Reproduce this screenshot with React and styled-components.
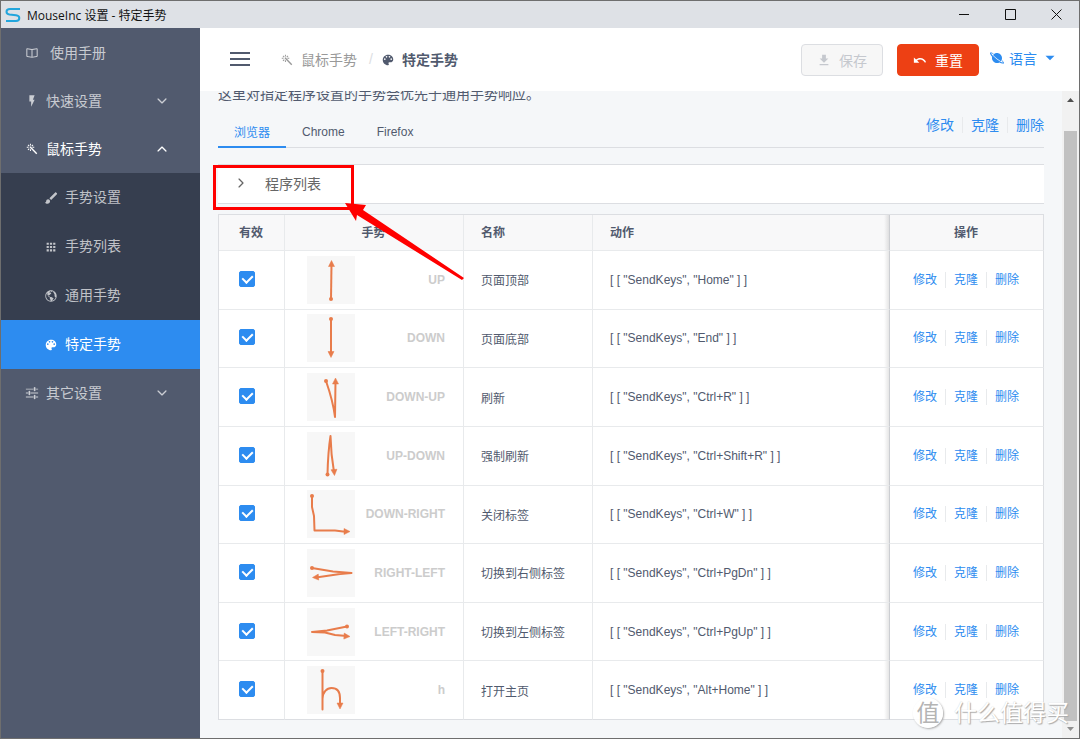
import React, { useState } from 'react';
import styled, { createGlobalStyle } from 'styled-components'
import { IoIosArrowDown, IoIosArrowForward, IoIosArrowUp, IoMdApps, IoMdArrowDropdown, IoMdBook, IoMdBrush, IoMdColorPalette, IoMdColorWand, IoMdDownload, IoMdFlash, IoMdGlobe, IoMdOptions, IoMdPlanet, IoMdUndo } from 'react-icons/io'

const GlobalStyle = createGlobalStyle`
* {
    box-sizing: border-box;
}
body {
    margin: 0;
    font-family: "Liberation Sans", "Noto Sans CJK SC", sans-serif;
    font-size: 12px;
    color: #515a6e;
}
button, input {
    font-family: inherit;
}
a {
    color: #2d8cf0;
    text-decoration: none;
}
`
const Window = styled.div`
display: flex;
flex-direction: column;
height: 100vh;
border: 1px solid #6e6e6e;
position: relative;
overflow: hidden;
`
const TitleBar = styled.div`
display: flex;
align-items: center;
flex: none;
height: 27px;
padding-left: 4px;
background-color: #dee1e6;
color: #111;
font-family: "Open Sans", "Noto Sans CJK SC", sans-serif;
`
const Title = styled.span`
flex: 1;
margin-left: 6px;
`
const WindowButton = styled.button`
display: flex;
align-items: center;
justify-content: center;
width: 46px;
height: 27px;
padding: 0;
border: none;
background: none;
`
const Body = styled.div`
display: flex;
flex: 1;
min-height: 0;
`
const Sidebar = styled.nav`
flex: none;
width: 199px;
padding-top: 1px;
background-color: #515a6e;
`
const MenuItem = styled.a`
display: flex;
align-items: center;
gap: ${props => props.$wide ? 11 : 7}px;
height: 48px;
padding: 0 31px 0 24px;
font-size: 14px;
color: ${props => props.$open ? '#fff' : 'rgba(255, 255, 255, 0.7)'};
svg {
    flex: none;
}
span {
    flex: 1;
    padding-bottom: 3px;
}
`
const SubMenu = styled.div`
background-color: #363e4f;
`
const SubItem = styled(MenuItem)`
height: 49px;
padding-left: 43px;
background-color: ${props => props.$active ? '#2d8cf0' : 'transparent'};
color: ${props => props.$active ? '#fff' : 'rgba(255, 255, 255, 0.7)'};
`
const Main = styled.div`
display: flex;
flex-direction: column;
flex: 1;
min-width: 0;
background-color: #f5f7f9;
`
const Header = styled.header`
display: flex;
align-items: center;
flex: none;
height: 63px;
padding: 0 20px 0 30px;
background-color: #fff;
`
const MenuButton = styled.button`
display: flex;
padding: 0 0 2px;
border: none;
background: none;
color: #515a6e;
`
const Breadcrumb = styled.div`
display: flex;
align-items: center;
flex: 1;
gap: 7px;
margin-left: 30px;
font-size: 14px;
color: #999;
span, b {
    padding-bottom: 2px;
}
`
const Separator = styled.span`
margin: 0 1px 0 5px;
color: #dcdee2;
`
const Current = styled.b`
color: #515a6e;
`
const HeaderButton = styled.button`
display: flex;
align-items: center;
justify-content: center;
gap: 8px;
width: 82px;
height: 32px;
padding: 0;
margin-right: 14px;
border: 1px solid ${props => props.$danger ? '#ed4014' : '#dcdee2'};
border-radius: 4px;
background-color: ${props => props.$danger ? '#ed4014' : '#f7f7f7'};
color: ${props => props.$danger ? '#fff' : '#c5c8ce'};
font-size: 14px;
`
const Language = styled.a`
display: flex;
align-items: center;
gap: 4px;
margin-left: -4px;
padding-bottom: 3px;
font-size: 14px;
`
const ScrollArea = styled.div`
display: flex;
flex: 1;
min-height: 0;
`
const Content = styled.main`
display: flex;
flex-direction: column;
flex: 1;
min-width: 0;
padding: 0 18px;
overflow: hidden;
`
const Intro = styled.p`
flex: none;
margin: -7px 0 13px;
font-size: 14px;
line-height: 20px;
`
const Tabs = styled.div`
display: flex;
flex: none;
height: 31px;
border-bottom: 1px solid #dcdee2;
`
const Tab = styled.button`
height: 31px;
padding: 0 16px;
border: none;
border-bottom: 2px solid ${props => props.$active ? '#2d8cf0' : 'transparent'};
background: none;
color: ${props => props.$active ? '#2d8cf0' : '#515a6e'};
font-size: 12px;
`
const Actions = styled.div`
display: flex;
justify-content: center;
font-size: ${props => props.$size || 12}px;
line-height: 16px;
a + a {
    margin-left: 8px;
    padding-left: 8px;
    border-left: 1px solid #e8eaec;
}
`
const TabExtra = styled.div`
margin-left: auto;
`
const Collapse = styled.div`
position: relative;
flex: none;
margin: 16px 0 10px;
border-top: 1px solid #dcdee2;
border-bottom: 1px solid #dcdee2;
background-color: #fff;
`
const CollapseHeader = styled.button`
display: flex;
align-items: center;
gap: 17px;
width: 100%;
height: 38px;
padding: 0 16px 2px;
border: none;
background: none;
color: #666;
font-size: 14px;
`
const Marker = styled.div`
position: absolute;
top: 0;
left: -5px;
width: 141px;
height: 45px;
border: 3px solid #f00;
`
const Pointer = styled.svg`
position: absolute;
top: 36px;
left: 126px;
z-index: 2;
pointer-events: none;
`
const TableWrap = styled.div`
flex: 1;
min-height: 0;
margin-bottom: 18px;
`
const Table = styled.table`
width: 100%;
height: 100%;
table-layout: fixed;
border-collapse: separate;
border-spacing: 0;
border-top: 1px solid #dcdee2;
border-left: 1px solid #dcdee2;
background-color: #fff;
th, td {
    padding: 0 18px 0 17px;
    border-right: 1px solid #e8eaec;
    border-bottom: 1px solid #e8eaec;
    text-align: left;
}
th {
    height: 36px;
    padding-bottom: 2px;
    background-color: #f8f8f9;
}
th:nth-child(-n + 2), th:last-child, td:first-child {
    text-align: center;
}
th:last-child, td:last-child {
    border-left: 1px solid #ccced2;
    border-right-color: #dcdee2;
}
tr:last-child td {
    border-bottom-color: #dcdee2;
}
th:nth-child(4), td:nth-child(4) {
    border-right: none;
    background-image: linear-gradient(to left, rgba(0, 0, 0, 0.1), transparent 5px);
}
`
const Col = styled.col`
width: ${props => props.$width ? props.$width + 'px' : 'auto'};
`
const Checkbox = styled.input`
appearance: none;
display: inline-grid;
place-content: center;
width: 16px;
height: 16px;
margin: 0 8px 2px 0;
border: 1px solid #2d8cf0;
border-radius: 2px;
background-color: #fff;
vertical-align: middle;
&:checked {
    background-color: #2d8cf0;
}
&:checked::after {
    content: "";
    width: 5px;
    height: 8px;
    border: solid #fff;
    border-width: 0 2px 2px 0;
    transform: translateY(-1px) rotate(45deg);
}
`
const GestureCell = styled.div`
display: flex;
align-items: center;
justify-content: space-between;
padding-left: 5px;
color: #ccc;
font-weight: bold;
svg {
    background-color: #f7f7f7;
}
`
const Scrollbar = styled.div`
display: flex;
flex-direction: column;
align-items: center;
flex: none;
width: 17px;
padding: 7px 0;
background-color: #f1f1f1;
`
const Track = styled.div`
flex: 1;
width: 13px;
margin: 9px 0 6px;
padding-top: 20px;
`
const Thumb = styled.div`
height: 100%;
background-color: #c1c1c1;
`
const ArrowMark = styled.svg`
flex: none;
`
const Watermark = styled.div`
position: absolute;
right: 10px;
bottom: 9px;
z-index: 3;
display: flex;
align-items: center;
gap: 11px;
color: #fff;
font-size: 23px;
line-height: 32px;
text-shadow: 1px 1px 1px #aaa, 0 0 1px #ccc;
pointer-events: none;
`
const Badge = styled.span`
display: flex;
align-items: center;
justify-content: center;
width: 30px;
height: 30px;
border-radius: 50%;
background-color: rgba(255, 255, 255, 0.9);
box-shadow: 1px 1px 2px #aaa;
color: #b4b4b4;
text-shadow: none;
`

const gestures = [
    { code: 'UP', name: '页面顶部', key: 'Home', start: [24, 43], d: 'M24 43L24.5 8', tip: [24.5, 4.5, -90] },
    { code: 'DOWN', name: '页面底部', key: 'End', start: [24, 5], d: 'M24 5V41', tip: [24, 43.5, 90] },
    { code: 'DOWN-UP', name: '刷新', key: 'Ctrl+R', start: [19, 8], d: 'M19 8Q26 28 28 44L28.5 8', tip: [28.5, 5, -90] },
    { code: 'UP-DOWN', name: '强制刷新', key: 'Ctrl+Shift+R', start: [20.5, 42.5], d: 'M20.5 42.5Q21 20 23.5 4Q24 23 27 40', tip: [27.5, 43.5, 85] },
    { code: 'DOWN-RIGHT', name: '关闭标签', key: 'Ctrl+W', start: [5, 6], d: 'M5 6V17L7 26L7.5 40.5H28L36 41.5H40', tip: [43, 41.5, 0] },
    { code: 'RIGHT-LEFT', name: '切换到右侧标签', key: 'Ctrl+PgDn', start: [5, 19], d: 'M5 19L26 22.5L44.5 24L33 25L9 28.5', tip: [5.5, 28.5, 176] },
    { code: 'LEFT-RIGHT', name: '切换到左侧标签', key: 'Ctrl+PgUp', start: [40, 18.5], d: 'M40 18.5L20 22.5L5 24L18 24.5L28 27L40 28', tip: [43, 28.5, 4] },
    { code: 'h', name: '打开主页', key: 'Alt+Home', start: [15.5, 5], d: 'M15.5 5V43.5V33C15.5 26 20 22 24.5 22C30 22 33 25 33 32V40', tip: [33, 43, 90] },
]

const GestureIcon = ({ start, d, tip }) => (
    <svg width="48" height="48" viewBox="0 0 48 48">
        <path d={d} fill="none" stroke="#e87c4b" strokeWidth="2" strokeLinejoin="round" />
        <circle cx={start[0]} cy={start[1]} r="2" fill="#e87c4b" />
        <path d="M0 0L-6 -3V3Z" fill="#e87c4b" stroke="#e87c4b" strokeWidth=".5" transform={`translate(${tip[0]} ${tip[1]}) rotate(${tip[2]})`} />
    </svg>
)

const ActionLinks = ({ size }) => (
    <Actions $size={size}>
        <a href="#edit">修改</a>
        <a href="#clone">克隆</a>
        <a href="#delete">删除</a>
    </Actions>
)

const Row = ({ gesture }) => {
    const [checked, setChecked] = useState(true)
    return (
        <tr>
            <td><Checkbox type="checkbox" aria-label={gesture.name} checked={checked} onChange={() => setChecked(!checked)} /></td>
            <td>
                <GestureCell>
                    <GestureIcon {...gesture} />
                    <span>{gesture.code}</span>
                </GestureCell>
            </td>
            <td>{gesture.name}</td>
            <td>{`[ [ "SendKeys", "${gesture.key}" ] ]`}</td>
            <td><ActionLinks /></td>
        </tr>
    )
}

const App = () => {
    const [tab, setTab] = useState('浏览器')
    return (
        <Window>
            <GlobalStyle />
            <TitleBar>
                <svg width="16" height="16" viewBox="0 0 16 16" fill="none" stroke="#22a5dc" strokeWidth="2">
                    <path d="M15 2H5C2.5 2 1.5 3 1.5 4.7C1.5 6.5 2.8 7.2 4.5 7.5L11 8.3C13 8.6 14.3 9.3 14.3 11C14.3 13 13 14 11 14H1" />
                </svg>
                <Title>MouseInc 设置 - 特定手势</Title>
                <WindowButton aria-label="最小化">
                    <svg width="11" height="11" stroke="#111"><path d="M0 5.5H10" /></svg>
                </WindowButton>
                <WindowButton aria-label="最大化">
                    <svg width="11" height="11" stroke="#111" fill="none"><path d="M.5 .5H10.5V10.5H.5Z" /></svg>
                </WindowButton>
                <WindowButton aria-label="关闭">
                    <svg width="11" height="11" stroke="#111"><path d="M.5 .5L10.5 10.5M10.5 .5L.5 10.5" /></svg>
                </WindowButton>
            </TitleBar>
            <Body>
                <Sidebar>
                    <MenuItem href="#manual" $wide><IoMdBook size={14} /><span>使用手册</span></MenuItem>
                    <MenuItem href="#quick"><IoMdFlash size={14} /><span>快速设置</span><IoIosArrowDown size={14} /></MenuItem>
                    <MenuItem href="#gesture" $open><IoMdColorWand size={14} /><span>鼠标手势</span><IoIosArrowUp size={14} /></MenuItem>
                    <SubMenu>
                        <SubItem href="#gesture-settings"><IoMdBrush size={14} /><span>手势设置</span></SubItem>
                        <SubItem href="#gesture-list"><IoMdApps size={14} /><span>手势列表</span></SubItem>
                        <SubItem href="#gesture-common"><IoMdGlobe size={14} /><span>通用手势</span></SubItem>
                        <SubItem href="#gesture-specific" $active><IoMdColorPalette size={14} /><span>特定手势</span></SubItem>
                    </SubMenu>
                    <MenuItem href="#other"><IoMdOptions size={14} /><span>其它设置</span><IoIosArrowDown size={14} /></MenuItem>
                </Sidebar>
                <Main>
                    <Header>
                        <MenuButton aria-label="菜单">
                            <svg width="20" height="14" stroke="currentColor" strokeWidth="2"><path d="M0 1H20M0 7H20M0 13H20" /></svg>
                        </MenuButton>
                        <Breadcrumb>
                            <IoMdColorWand size={14} />
                            <span>鼠标手势</span>
                            <Separator>/</Separator>
                            <IoMdColorPalette size={14} color="#515a6e" />
                            <Current>特定手势</Current>
                        </Breadcrumb>
                        <HeaderButton disabled><IoMdDownload size={14} />保存</HeaderButton>
                        <HeaderButton $danger><IoMdUndo size={14} />重置</HeaderButton>
                        <Language href="#language">
                            <IoMdPlanet size={16} />
                            语言
                            <IoMdArrowDropdown size={18} />
                        </Language>
                    </Header>
                    <ScrollArea>
                        <Content>
                            <Intro>这里对指定程序设置的手势会优先于通用手势响应。</Intro>
                            <Tabs>
                                {['浏览器', 'Chrome', 'Firefox'].map(name => (
                                    <Tab key={name} $active={tab === name} onClick={() => setTab(name)}>{name}</Tab>
                                ))}
                                <TabExtra><ActionLinks size={14} /></TabExtra>
                            </Tabs>
                            <Collapse>
                                <CollapseHeader><IoIosArrowForward size={14} />程序列表</CollapseHeader>
                                <Marker />
                                <Pointer width="122" height="80" viewBox="0 0 122 80">
                                    <path d="M1 2L22 4L19 9L120 77L118 79L13 14L12 20Z" fill="#f00" />
                                </Pointer>
                            </Collapse>
                            <TableWrap>
                                <Table>
                                    <colgroup>
                                        <Col $width={66} />
                                        <Col $width={179} />
                                        <Col $width={129} />
                                        <Col />
                                        <Col $width={155} />
                                    </colgroup>
                                    <thead>
                                        <tr>
                                            <th>有效</th>
                                            <th>手势</th>
                                            <th>名称</th>
                                            <th>动作</th>
                                            <th>操作</th>
                                        </tr>
                                    </thead>
                                    <tbody>
                                        {gestures.map(gesture => <Row key={gesture.code} gesture={gesture} />)}
                                    </tbody>
                                </Table>
                            </TableWrap>
                        </Content>
                        <Scrollbar>
                            <ArrowMark width="7" height="4"><path d="M0 4L3.5 0L7 4Z" fill="#505050" /></ArrowMark>
                            <Track><Thumb /></Track>
                            <ArrowMark width="7" height="4"><path d="M0 0L3.5 4L7 0Z" fill="#909090" /></ArrowMark>
                        </Scrollbar>
                    </ScrollArea>
                </Main>
            </Body>
            <Watermark>
                <Badge>值</Badge>
                什么值得买
            </Watermark>
        </Window>
    );
}

export default App;
